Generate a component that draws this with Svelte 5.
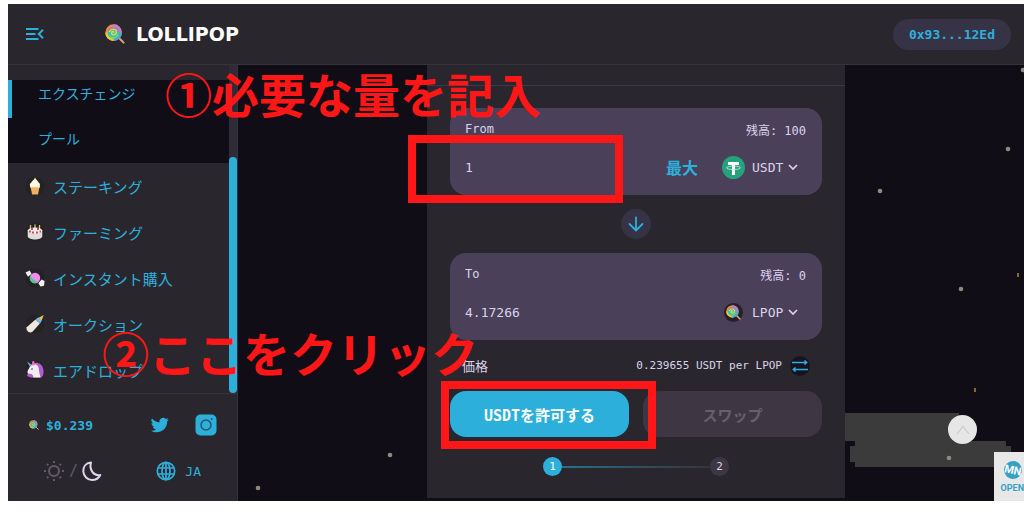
<script lang="ts">
  interface MenuItem {
    icon: string;
    label: string;
  }

  const submenu = ['エクスチェンジ', 'プール'];

  const menu: MenuItem[] = [
    { icon: 'icecream', label: 'ステーキング' },
    { icon: 'cake', label: 'ファーミング' },
    { icon: 'candy', label: 'インスタント購入' },
    { icon: 'bottle', label: 'オークション' },
    { icon: 'unicorn', label: 'エアドロップ' }
  ];

  const stars = [
    { x: 770, y: 84 },
    { x: 642, y: 126 },
    { x: 723, y: 224 },
    { x: 711, y: 393 },
    { x: 785, y: 5 },
    { x: 152, y: 390 },
    { x: 20, y: 423 }
  ];

  const sparks = [
    { x: 779, y: 210 },
    { x: 736, y: 325 }
  ];

  let active = $state(submenu[0]);
  let fromAmount = $state('1');
  let toAmount = $state('4.17266');
  let fromToken = $state('USDT');
  let toToken = $state('LPOP');
</script>

{#snippet lollipop(size: number)}
  <svg width={size} height={size} viewBox="0 0 20 20" aria-hidden="true">
    <path d="M13.5 13.5 18.6 18.6" stroke="#d9a878" stroke-width="2" stroke-linecap="round" />
    <circle cx="8.6" cy="8.6" r="8.3" fill="#f08a3c" />
    <path d="M8.6.3a8.300 8.300 0 0 1 8.300 8.300h-3a5 5 0 0 0-5.300-5z" fill="#c877e0" />
    <path d="M16.900 8.600a8.300 8.300 0 0 1-8.300 8.300v-3a5 5 0 0 0 5-5.300z" fill="#4fa3e8" />
    <path d="M.3 8.600a8.300 8.300 0 0 0 8.300 8.300v-3a5 5 0 0 1-5-5.300z" fill="#f0c53c" />
    <circle cx="8.6" cy="8.6" r="6" fill="#24c9b4" />
    <path d="M8.700 8.800c.9-1.500-1.900-2-2.100.1-.2 2.700 4.800 2.700 4.900-.6.1-4.200-6.500-4.600-7.200-.1" fill="none" stroke="#f3d34a" stroke-width="1.400" />
    <path d="M4 6.500C6 2.300 12.800 3 13.400 8.300" fill="none" stroke="#e85ea8" stroke-width="1.300" />
    <path d="M4.500 11.500c2 3.400 7.500 2.900 8.700-1" fill="none" stroke="#6fdc5a" stroke-width="1.300" />
  </svg>
{/snippet}

{#snippet emoji(name: string)}
  <svg class="emoji" width="20" height="20" viewBox="0 0 20 20" aria-hidden="true">
    <circle cx="10" cy="10" r="9.500" fill="#242323" />
    {#if name === 'icecream'}
      <path d="M5.500 10.500h9l-1.500 8H7z" fill="#efb064" />
      <path d="M5.200 10h9.600v2H5.200z" fill="#f4c585" />
      <path d="M10 1.500c.5 2 3 3 3.600 5 1.800 1 2 4.300-.1 4.500H6.500C4.300 10.800 4.500 7.500 6.300 6.500 7 4.500 9.500 4 10 1.500z" fill="#fff8e4" />
    {:else if name === 'cake'}
      <path d="M5.500 3v5M10 2.500v5M14.500 3v5" stroke="#dcc873" stroke-width="1.300" />
      <path d="M2.700 8.500v6c1 4 13.600 4 14.600 0v-6z" fill="#dedcdc" />
      <ellipse cx="10" cy="8.500" rx="7.300" ry="3" fill="#f6f0ee" />
      <path d="M4 9.500h2M7 10.500h2M11 10.500h2M14.500 9.500h1.500M6 7h2M12 7h2" stroke="#d0475f" stroke-width="1.800" />
    {:else if name === 'candy'}
      <path d="M.5 4.500 4.700 2.500l1.800 3.300-3.500 2.900zM13.300 15.200l3.300-3.800 3 1.600-.6 4.700-3.500.8z" fill="#f3eff4" />
      <circle cx="10" cy="10" r="5.200" fill="#f08bf0" />
      <path d="M5.500 7.500c1.500 3.500 4.300 5.500 7.800 6.600A5.200 5.200 0 0 1 5.500 7.500z" fill="#52c88d" />
    {:else if name === 'bottle'}
      <path d="M14 3.500 18.700 1l-1.900 5.200-2 .6z" fill="#f0bf3d" />
      <path d="m10.700 5.300 2.800-2 3.300 3.200-1.700 2.900z" fill="#75bdf0" />
      <path d="m10.500 5.500 4.400 4-7.400 8.300c-3 2-7-1-5.800-4.500z" fill="#eee7df" />
    {:else}
      <path d="m2 1.500 4.500 3.200-1.800 1.600z" fill="#5bc3f0" />
      <path d="M5 5.500c4-5 13-3.500 13.500 5 .2 4-.5 5.500-2.500 7H5.500L2 16z" fill="#b35bd2" />
      <path d="M5.500 6c4-3.500 8-1 8.300 3 .3 3.500 1.200 5.500 1.700 8.500H8.300c0-3-1.300-4-3.800-3.800C2.700 14 2 12.500 2.800 10.500z" fill="#f1edf2" />
      <circle cx="7" cy="9" r=".8" fill="#3d3645" />
      <path d="m7 1.500 2-.5 1 4-2.500.7z" fill="#ee75bd" />
    {/if}
  </svg>
{/snippet}

{#snippet chevron()}
  <svg class="chevron" width="10" height="6" viewBox="0 0 10 6" aria-hidden="true">
    <path d="m1 1 4 4 4-4" fill="none" stroke="currentColor" stroke-width="1.700" />
  </svg>
{/snippet}

<div class="screen">
  <header>
    <button class="plain" aria-label="メニュー">
      <svg width="18" height="14" viewBox="0 0 18 14">
        <path d="M0 2h12.500M0 7h9.500M0 12h12.500M17 2.800 12.800 7l4.200 4.200" fill="none" stroke="currentColor" stroke-width="2" />
      </svg>
    </button>
    <a class="brand" href="#home">
      {@render lollipop(20)}
      <span>LOLLIPOP</span>
    </a>
    <button class="wallet">0x93...12Ed</button>
  </header>

  <div class="body">
    <aside>
      <div class="scroller">
        <nav>
          <div class="submenu">
            {#each submenu as label}
              <a href="#swap" class:active={active === label} onclick={() => (active = label)}>{label}</a>
            {/each}
          </div>
          {#each menu as item}
            <a class="item" href="#{item.icon}">
              {@render emoji(item.icon)}
              {item.label}
            </a>
          {/each}
        </nav>
        <div class="track"><div class="thumb"></div></div>
      </div>

      <div class="tools">
        <div class="tool-row">
          <a class="price-tag" href="#price">{@render lollipop(10)} $0.239</a>
          <a class="social" href="#twitter" aria-label="Twitter">
            <svg width="18" height="18" viewBox="0 0 24 24" fill="currentColor">
              <path d="M23.6 4.700a9.600 9.600 0 0 1-2.800.8 4.900 4.900 0 0 0 2.100-2.700 9.700 9.700 0 0 1-3.100 1.200 4.900 4.900 0 0 0-8.400 4.500A13.900 13.900 0 0 1 1.300 3.300a4.900 4.900 0 0 0 1.500 6.500 4.900 4.900 0 0 1-2.200-.6c0 2.400 1.600 4.400 3.900 4.900-.7.2-1.500.2-2.200.1a4.900 4.900 0 0 0 4.600 3.400A9.900 9.900 0 0 1 0 19.600a13.900 13.900 0 0 0 7.500 2.200c9.100 0 14.300-7.700 14-14.600.9-.7 1.600-1.500 2.100-2.500z" />
            </svg>
          </a>
          <a class="social" href="#instagram" aria-label="Instagram">
            <svg width="22" height="22" viewBox="0 0 22 22">
              <rect x=".5" y=".5" width="21" height="21" rx="5" fill="currentColor" />
              <circle cx="11" cy="11" r="5" fill="none" stroke="#28566a" stroke-width="1.500" />
              <circle cx="16.700" cy="5" r="1" fill="#28566a" />
            </svg>
          </a>
        </div>
        <div class="tool-row">
          <button class="plain theme" aria-label="テーマ">
            <svg width="22" height="22" viewBox="0 0 22 22" fill="none" stroke="#605a6c" stroke-width="2">
              <circle cx="11" cy="11" r="5" />
              <path d="M11 1v2M11 19v2M1 11h2M19 11h2M4 4l1.300 1.300M16.700 16.700 18 18M4 18l1.300-1.300M16.700 5.300 18 4" />
            </svg>
            <span>/</span>
            <svg width="20" height="20" viewBox="0 0 20 20" fill="none" stroke="#dfd4f1" stroke-width="2" stroke-linejoin="round">
              <path d="M9 1.500C3.500 2 1 6 1.300 10.500 1.600 15 5.500 19 10 19c4 0 6.700-1.800 8.300-5C11.500 15.500 7 8.500 9 1.500z" />
            </svg>
          </button>
          <button class="plain lang">
            <svg width="20" height="20" viewBox="0 0 20 20" fill="none" stroke="currentColor" stroke-width="1.700">
              <circle cx="10" cy="10" r="8.700" />
              <ellipse cx="10" cy="10" rx="4" ry="8.700" />
              <path d="M1.900 7h16.200M1.900 13h16.200M10 1v18" />
            </svg>
            JA
          </button>
        </div>
      </div>
    </aside>

    <main>
      <svg class="sky" width="786" height="436" viewBox="0 0 786 436" aria-hidden="true">
        <path d="M600 348h121v28h47v5h5v21H617v-5h-5v-16h5v-5h-17z" fill="#3c3b3b" />
        {#each stars as star}
          <circle cx={star.x} cy={star.y} r="2.300" fill="#8d8b7a" />
        {/each}
        {#each sparks as spark}
          <rect x={spark.x} y={spark.y - 2} width="2" height="4" fill="#8a6a2c" />
        {/each}
      </svg>

      <section class="panel">
        <form onsubmit={(e) => e.preventDefault()}>
          <div class="card">
            <div class="card-row small">
              <label for="from-amount">From</label>
              <span>残高: 100</span>
            </div>
            <div class="card-row">
              <input id="from-amount" bind:value={fromAmount} />
              <button type="button" class="plain max">最大</button>
              <div class="token">
                <svg width="23" height="23" viewBox="0 0 23 23" aria-hidden="true">
                  <circle cx="11.500" cy="11.500" r="11.500" fill="#26a17b" />
                  <path d="M6 6h11v3h-4v10h-3V9H6z" fill="#fff" />
                  <ellipse cx="11.500" cy="11.800" rx="7" ry="1.700" fill="none" stroke="#d4eee5" stroke-width=".8" />
                </svg>
                <select aria-label="From token" bind:value={fromToken}>
                  <option>USDT</option>
                  <option>LPOP</option>
                </select>
                {@render chevron()}
              </div>
            </div>
          </div>

          <button type="button" class="flip" aria-label="切り替え">
            <svg width="16" height="16" viewBox="0 0 16 16" fill="none" stroke="currentColor" stroke-width="1.800" stroke-linecap="round" stroke-linejoin="round">
              <path d="M8 1.500v13M1.500 8 8 14.500 14.500 8" />
            </svg>
          </button>

          <div class="card">
            <div class="card-row small">
              <label for="to-amount">To</label>
              <span>残高: 0</span>
            </div>
            <div class="card-row">
              <input id="to-amount" bind:value={toAmount} />
              <div class="token">
                <span class="coin">{@render lollipop(15)}</span>
                <select aria-label="To token" bind:value={toToken}>
                  <option>LPOP</option>
                  <option>USDT</option>
                </select>
                {@render chevron()}
              </div>
            </div>
          </div>

          <div class="rate">
            <span class="rate-label">価格</span>
            <span>0.239655 USDT per LPOP</span>
            <button type="button" class="invert" aria-label="レートを反転">
              <svg width="16" height="12" viewBox="0 0 16 12" fill="none" stroke="currentColor" stroke-width="1.500">
                <path d="M0 2.500h14.500M12.500.5l2.200 2-2.200 2M16 9.500H1.500M3.500 7.500l-2.200 2 2.200 2" />
              </svg>
            </button>
          </div>

          <div class="actions">
            <button type="button" class="approve">USDTを許可する</button>
            <button type="submit" class="swap" disabled>スワップ</button>
          </div>

          <div class="steps">
            <span class="step current">1</span>
            <span class="line"></span>
            <span class="step">2</span>
          </div>
        </form>
      </section>

      <button class="to-top" aria-label="トップへ">
        <svg width="14" height="10" viewBox="0 0 14 10">
          <path d="m1 9 6-7.500L13 9" fill="none" stroke="#c9c9c9" stroke-width="1.200" />
        </svg>
      </button>

      <a class="open-tab" href="#open">
        <svg width="22" height="20" viewBox="0 0 22 20" aria-hidden="true">
          <circle cx="11" cy="10" r="9" fill="#35a2c5" />
          <text x="11" y="14" text-anchor="middle" transform="rotate(12 11 10)">MN</text>
        </svg>
        <span>OPEN</span>
      </a>
    </main>
  </div>

  <!-- walkthrough marks -->
  <div class="mark mark-amount"></div>
  <div class="mark mark-approve"></div>
  <p class="note note-amount">①必要な量を記入</p>
  <p class="note note-approve">②ここをクリック</p>
</div>

<style>
  :global(body) {
    margin: 0;
    background: #fff;
  }

  .screen {
    --blue: #2dafdc;
    --surface: #29272d;
    --line: #35323c;
    --text: #dcd2ec;
    --night: #110d17;
    position: relative;
    display: flex;
    flex-direction: column;
    box-sizing: border-box;
    min-height: calc(100vh - 15px);
    margin: 4px 0 11px 8px;
    overflow: hidden;
    background: var(--night);
    color: var(--text);
    font-family: 'DejaVu Sans Mono', 'Noto Sans CJK JP', monospace;
    font-size: 13px;
  }

  a {
    color: var(--blue);
    text-decoration: none;
  }

  button,
  input,
  select {
    margin: 0;
    padding: 0;
    border: 0;
    background: none;
    color: inherit;
    font: inherit;
  }

  button {
    cursor: pointer;
  }

  svg {
    display: block;
    flex: none;
  }

  .plain {
    display: flex;
    align-items: center;
    color: var(--blue);
  }

  header {
    display: flex;
    align-items: center;
    height: 60px;
    padding: 0 13px 0 18px;
    background: var(--surface);
    border-bottom: 1px solid var(--line);
  }

  .brand {
    display: flex;
    align-items: center;
    gap: 11px;
    margin-left: 61px;
    color: #fff;
    font-family: 'DejaVu Sans', sans-serif;
    font-size: 19px;
    font-weight: 700;
  }

  .wallet {
    height: 31px;
    margin-left: auto;
    padding: 0 16px;
    border-radius: 16px;
    background: #363347;
    color: var(--blue);
    font-size: 13px;
    font-weight: 700;
  }

  .body {
    display: flex;
    flex: 1;
  }

  aside {
    display: flex;
    flex-direction: column;
    box-sizing: border-box;
    width: 230px;
    background: var(--surface);
    border-right: 1px solid var(--line);
  }

  .scroller {
    display: flex;
    border-bottom: 1px solid var(--line);
  }

  nav {
    flex: 1;
    padding-top: 15px;
  }

  .submenu {
    display: grid;
    gap: 7px;
    background: var(--night);
  }

  .submenu a {
    height: 38px;
    padding-left: 26px;
    border-left: 4px solid transparent;
    font-size: 14px;
    line-height: 28px;
  }

  .submenu a.active {
    border-color: var(--blue);
  }

  .item {
    display: flex;
    align-items: center;
    gap: 8px;
    height: 46px;
    padding-left: 17px;
    font-size: 15px;
  }

  .track {
    display: flex;
    align-items: flex-end;
    width: 8px;
    background: #2f2c38;
  }

  .thumb {
    width: 8px;
    height: 72%;
    border-radius: 4px;
    background: var(--blue);
  }

  .tools {
    padding: 8px 20px 0 21px;
  }

  .tool-row {
    display: flex;
    align-items: center;
    height: 46px;
  }

  .price-tag {
    display: flex;
    align-items: center;
    gap: 7px;
    margin-right: auto;
    font-weight: 700;
  }

  .social {
    margin-left: 26px;
  }

  .theme {
    gap: 4px;
    margin-left: 14px;
    margin-right: auto;
    color: #605a6c;
    font-size: 15px;
  }

  .lang {
    gap: 9px;
    margin-right: 16px;
  }

  main {
    position: relative;
    display: flex;
    flex: 1;
    justify-content: center;
    padding: 0 0 3px 10px;
    overflow: hidden;
  }

  .sky {
    position: absolute;
    top: 0;
    right: 0;
  }

  .panel {
    position: relative;
    box-sizing: border-box;
    width: 100%;
    max-width: 418px;
    padding-top: 20px;
    background: var(--surface);
  }

  form {
    display: flex;
    flex-direction: column;
    padding: 22px 23px;
    border-top: 1px solid #3c3848;
  }

  .card {
    display: flex;
    flex-direction: column;
    gap: 10px;
    padding: 11px 16px 10px 15px;
    border-radius: 16px;
    background: #4a405a;
  }

  .card-row {
    display: flex;
    align-items: center;
    height: 36px;
  }

  .card-row.small {
    justify-content: space-between;
    height: 20px;
    font-size: 12px;
  }

  .card input {
    flex: 1;
    min-width: 0;
    outline: none;
  }

  .max {
    margin-right: 24px;
    font-size: 16px;
    font-weight: 700;
  }

  .token {
    display: flex;
    align-items: center;
    padding-right: 8px;
  }

  .token select {
    width: 36px;
    margin-left: 7px;
    appearance: none;
    outline: none;
  }

  .coin {
    display: flex;
    align-items: center;
    justify-content: center;
    width: 19px;
    height: 19px;
    margin-right: 2px;
    border-radius: 50%;
    background: #242226;
  }

  .flip {
    display: flex;
    align-items: center;
    justify-content: center;
    align-self: center;
    width: 30px;
    height: 30px;
    margin: 14px 0;
    border-radius: 50%;
    background: #363347;
    color: var(--blue);
  }

  .rate {
    display: flex;
    align-items: center;
    height: 51px;
    padding: 0 12px;
    font-size: 11px;
  }

  .rate-label {
    margin-right: auto;
    font-size: 13px;
  }

  .invert {
    display: flex;
    align-items: center;
    justify-content: center;
    width: 20px;
    height: 20px;
    margin-left: 8px;
    border-radius: 50%;
    background: #181322;
    color: var(--blue);
  }

  .actions {
    display: grid;
    grid-template-columns: 1fr 1fr;
    gap: 14px;
  }

  .actions button {
    height: 46px;
    border-radius: 16px;
    font-size: 15px;
    font-weight: 700;
  }

  .approve {
    background: var(--blue);
    color: #fff;
  }

  .actions .swap {
    background: #3e3743;
    color: #675f70;
    cursor: default;
  }

  .steps {
    display: flex;
    align-items: center;
    margin-top: 20px;
    padding: 0 93px;
  }

  .step {
    width: 19px;
    height: 19px;
    border-radius: 50%;
    background: #3e3743;
    font-size: 11px;
    line-height: 19px;
    text-align: center;
  }

  .step.current {
    background: var(--blue);
    color: #fff;
  }

  .line {
    flex: 1;
    height: 2px;
    background: linear-gradient(90deg, #2a6f8a, #36333c);
  }

  .to-top {
    position: absolute;
    right: 47px;
    bottom: 57px;
    display: flex;
    align-items: center;
    justify-content: center;
    width: 29px;
    height: 29px;
    border-radius: 50%;
    background: #e6e6e6;
  }

  .open-tab {
    position: absolute;
    right: 0;
    bottom: 0;
    display: flex;
    flex-direction: column;
    align-items: flex-end;
    gap: 3px;
    box-sizing: border-box;
    width: 30px;
    height: 49px;
    padding-top: 8px;
    background: #e8e8e8;
    color: #35a2c5;
    font-family: Roboto, sans-serif;
    font-size: 9px;
    font-weight: 700;
  }

  .open-tab text {
    fill: #fff;
    font-size: 11px;
  }

  .mark {
    position: absolute;
    box-sizing: border-box;
    width: 215px;
    height: 68px;
    border: 8px solid #ff1616;
    pointer-events: none;
  }

  .mark-amount {
    top: 131px;
    left: 400px;
  }

  .mark-approve {
    top: 377px;
    left: 433px;
  }

  .note {
    position: absolute;
    margin: 0;
    color: #ff1616;
    font-family: 'Noto Sans CJK JP', sans-serif;
    font-size: 47px;
    font-weight: 700;
    line-height: 56px;
    white-space: nowrap;
    pointer-events: none;
  }

  .note-amount {
    top: 61px;
    left: 157px;
  }

  .note-approve {
    top: 320px;
    left: 94px;
  }
</style>
